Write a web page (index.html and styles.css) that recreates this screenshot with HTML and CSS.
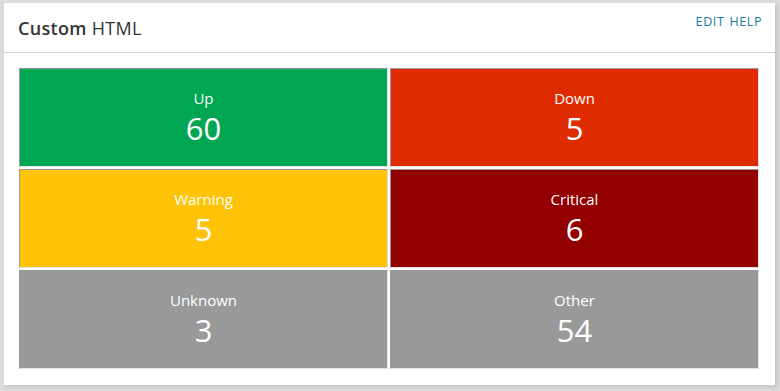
FILE: index.html
```html
<!DOCTYPE html>
<html>
<head>
    <title>Custom HTML</title>
    <meta name="viewport" content="width=device-width" />
    <link rel="stylesheet" href="styles.css">
</head>
<body>
    <div class="panel">
        <div class="panel-head">
            <h1><b>Custom</b> HTML</h1>
            <div class="links">
                <a href="#">EDIT</a>
                <a href="#">HELP</a>
            </div>
        </div>
        <div class="panel-body">
            <div class="status">
                <div class="cell up">
                    <span class="label">Up</span>
                    <span class="count">60</span>
                </div>
                <div class="cell down">
                    <span class="label">Down</span>
                    <span class="count">5</span>
                </div>
                <div class="cell warning">
                    <span class="label">Warning</span>
                    <span class="count">5</span>
                </div>
                <div class="cell critical">
                    <span class="label">Critical</span>
                    <span class="count">6</span>
                </div>
                <div class="cell unknown">
                    <span class="label">Unknown</span>
                    <span class="count">3</span>
                </div>
                <div class="cell other">
                    <span class="label">Other</span>
                    <span class="count">54</span>
                </div>
            </div>
        </div>
    </div>
</body>
</html>
```

FILE: styles.css
```css
html, body {
    margin: 0px;
    height: 100%;
}
body {
    background-color: #dcdcdc;
    font-family: "Open Sans", sans-serif;
    padding: 3px 5px 6px 4px;
    box-sizing: border-box;
}
.panel {
    background-color: #fff;
    box-shadow: 2px 2px 4px rgba(0, 0, 0, 0.12);
    height: 382px;
}
.panel-head {
    display: flex;
    justify-content: space-between;
    align-items: flex-start;
    height: 49px;
    border-bottom: 1px solid #d6d6d6;
    padding: 0px 13px 0px 14px;
}
h1 {
    margin: 0px;
    padding-top: 13px;
    font-size: 18px;
    font-weight: normal;
    color: #333;
    letter-spacing: 0.3px;
}
h1 b {
    font-weight: 600;
}
.links {
    padding-top: 10px;
    display: flex;
    gap: 5px;
}
.links a {
    font-size: 12.5px;
    color: #177a9c;
    text-decoration: none;
    letter-spacing: 0.6px;
}
.panel-body {
    padding: 15px 16px 15px 15px;
}
.status {
    display: grid;
    grid-template-columns: 1fr 1fr;
    grid-auto-rows: 99px;
    gap: 2px;
    height: 301px;
}
.cell {
    display: flex;
    flex-direction: column;
    align-items: center;
    justify-content: center;
    color: #fff;
    border-top: 1px solid #9a9a9a;
    border-left: 1px solid #9a9a9a;
    border-bottom: 1px solid #e4e4e4;
    border-right: 1px solid #e4e4e4;
}
.label {
    font-size: 15px;
    line-height: 20px;
}
.count {
    font-size: 31px;
    line-height: 40px;
}
.up { background-color: #00a651; }
.down { background-color: #de2c00; }
.warning { background-color: #fec306; }
.critical { background-color: #920000; }
.unknown { background-color: #999; }
.other { background-color: #999; }
```
